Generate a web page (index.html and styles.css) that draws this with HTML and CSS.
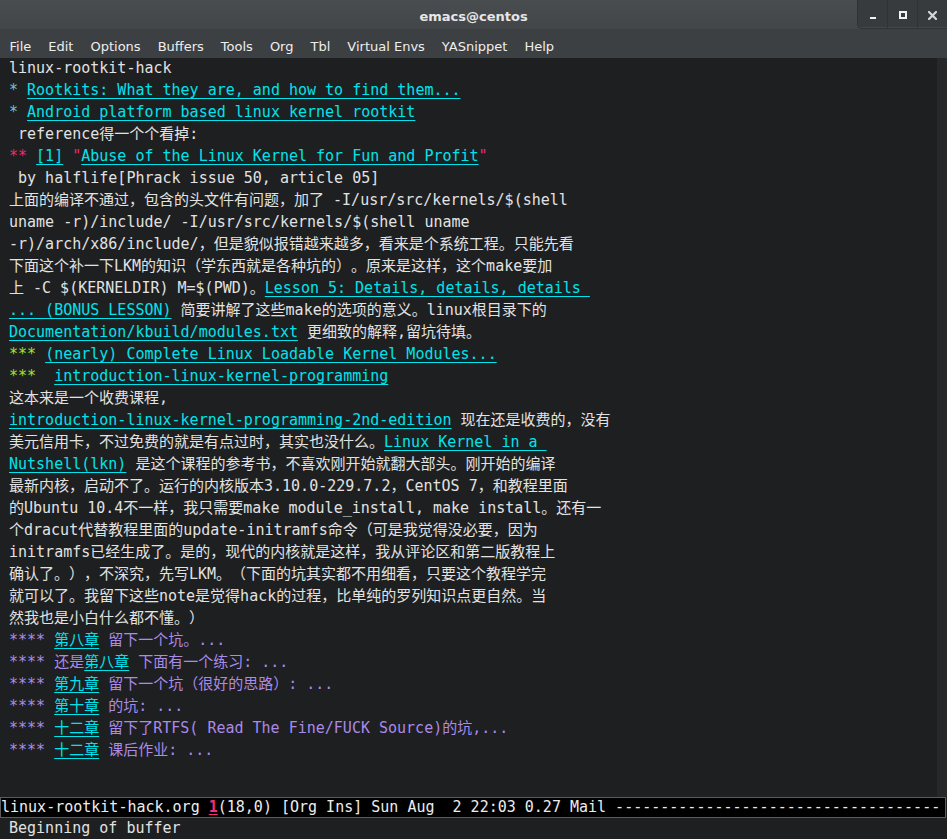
FILE: index.html
```html
<!DOCTYPE html>
<html lang="zh-CN">
<head>
<meta charset="utf-8">
<title>emacs@centos</title>
<link rel="stylesheet" href="styles.css">
</head>
<body>
<div class="frame">
  <header class="titlebar">
    <div class="title-spacer"></div>
    <div class="title">emacs@centos</div>
    <div class="wm">
      <div class="wm-btn"><svg width="8" height="8" viewBox="0 0 8 8"><rect x="1" y="6" width="6" height="2" fill="#f2f2f2"/></svg></div>
      <div class="wm-btn"><svg width="8" height="8" viewBox="0 0 8 8"><rect x="1" y="1" width="6" height="6" fill="none" stroke="#f2f2f2" stroke-width="2"/></svg></div>
      <div class="wm-btn"><svg width="9" height="9" viewBox="0 0 9 9"><path d="M1 1L8 8M8 1L1 8" stroke="#d6d6d6" stroke-width="2.2" stroke-linecap="square"/></svg></div>
    </div>
  </header>
  <nav class="menubar">
    <span class="mi">File</span><span class="mi">Edit</span><span class="mi">Options</span><span class="mi">Buffers</span><span class="mi">Tools</span><span class="mi">Org</span><span class="mi">Tbl</span><span class="mi">Virtual Envs</span><span class="mi">YASnippet</span><span class="mi">Help</span>
  </nav>
  <main class="window">
    <div class="buffer">
<div class="ln">linux-rootkit-hack</div>
<div class="ln"><span class="h1">* </span><a class="lk">Rootkits: What they are, and how to find them...</a></div>
<div class="ln"><span class="h1">* </span><a class="lk">Android platform based linux kernel rootkit</a></div>
<div class="ln"> reference得一个个看掉:</div>
<div class="ln"><span class="h2">** </span><a class="lk">[1]</a> <span class="h2">"</span><a class="lk">Abuse of the Linux Kernel for Fun and Profit</a><span class="h2">"</span></div>
<div class="ln"> by halflife[Phrack issue 50, article 05]</div>
<div class="ln">上面的编译不通过，包含的头文件有问题，加了 -I/usr/src/kernels/$(shell</div>
<div class="ln">uname -r)/include/ -I/usr/src/kernels/$(shell uname</div>
<div class="ln">-r)/arch/x86/include/，但是貌似报错越来越多，看来是个系统工程。只能先看</div>
<div class="ln">下面这个补一下LKM的知识（学东西就是各种坑的）。原来是这样，这个make要加</div>
<div class="ln">上 -C $(KERNELDIR) M=$(PWD)。<a class="lk">Lesson 5: Details, details, details </a></div>
<div class="ln"><a class="lk">... (BONUS LESSON)</a> 简要讲解了这些make的选项的意义。linux根目录下的</div>
<div class="ln"><a class="lk">Documentation/kbuild/modules.txt</a> 更细致的解释,留坑待填。</div>
<div class="ln"><span class="h3">*** </span><a class="lk">(nearly) Complete Linux Loadable Kernel Modules...</a></div>
<div class="ln"><span class="h3">***  </span><a class="lk">introduction-linux-kernel-programming</a></div>
<div class="ln">这本来是一个收费课程,</div>
<div class="ln"><a class="lk">introduction-linux-kernel-programming-2nd-edition</a> 现在还是收费的，没有</div>
<div class="ln">美元信用卡，不过免费的就是有点过时，其实也没什么。<a class="lk">Linux Kernel in a </a></div>
<div class="ln"><a class="lk">Nutshell(lkn)</a> 是这个课程的参考书，不喜欢刚开始就翻大部头。刚开始的编译</div>
<div class="ln">最新内核，启动不了。运行的内核版本3.10.0-229.7.2，CentOS 7，和教程里面</div>
<div class="ln">的Ubuntu 10.4不一样，我只需要make module_install, make install。还有一</div>
<div class="ln">个dracut代替教程里面的update-initramfs命令（可是我觉得没必要，因为</div>
<div class="ln">initramfs已经生成了。是的，现代的内核就是这样，我从评论区和第二版教程上</div>
<div class="ln">确认了。），不深究，先写LKM。（下面的坑其实都不用细看，只要这个教程学完</div>
<div class="ln">就可以了。我留下这些note是觉得hack的过程，比单纯的罗列知识点更自然。当</div>
<div class="ln">然我也是小白什么都不懂。）</div>
<div class="ln h4">**** <a class="lk">第八章</a> 留下一个坑。...</div>
<div class="ln h4">**** 还是<a class="lk">第八章</a> 下面有一个练习: ...</div>
<div class="ln h4">**** <a class="lk">第九章</a> 留下一个坑（很好的思路）: ...</div>
<div class="ln h4">**** <a class="lk">第十章</a> 的坑: ...</div>
<div class="ln h4">**** <a class="lk">十二章</a> 留下了RTFS( Read The Fine/FUCK Source)的坑,...</div>
<div class="ln h4">**** <a class="lk">十二章</a> 课后作业: ...</div>
    </div>
    <div class="fringe-right"></div>
  </main>
  <footer class="modeline"><span class="ml-text">linux-rootkit-hack.org <span class="ml-num">1</span>(18,0) [Org Ins] Sun Aug  2 22:03 0.27 Mail ------------------------------------</span></footer>
  <div class="minibuffer">Beginning of buffer</div>
</div>
</body>
</html>
```

FILE: styles.css
```css
* { box-sizing: border-box; }
html, body {
  margin: 0;
  padding: 0;
  background: #1d1f21;
}
.frame {
  width: 947px;
  height: 839px;
  overflow: hidden;
  display: flex;
  flex-direction: column;
  background: #1d1f21;
}
.titlebar {
  height: 29px;
  flex: none;
  display: grid;
  grid-template-columns: 1fr auto 1fr;
  align-items: start;
  background: linear-gradient(#4a4d4f, #434648);
}
.title {
  font-family: "DejaVu Sans", sans-serif;
  font-weight: bold;
  font-size: 13px;
  color: #e6e6e6;
  line-height: 33px;
}
.wm {
  justify-self: end;
  display: flex;
  height: 29px;
  background: #383b3d;
  border-left: 1px solid #2f3234;
  border-bottom: 1px solid #2f3234;
  border-bottom-left-radius: 5px;
  box-shadow: inset 0 -1px 0 #45484a;
}
.wm-btn {
  width: 30px;
  display: flex;
  align-items: center;
  justify-content: center;
  padding-top: 2px;
  border-left: 1px solid #303335;
}
.wm-btn:first-child { border-left: none; width: 29px; }
.menubar {
  height: 29px;
  flex: none;
  display: flex;
  align-items: flex-start;
  padding-top: 6px;
  padding-left: 1px;
  background: #3d4042;
  font-family: "DejaVu Sans", sans-serif;
  font-size: 13px;
  color: #eeeeee;
}
.mi {
  padding: 0 8.5px;
  line-height: 23px;
}
.window {
  flex: 1;
  display: flex;
  min-height: 0;
}
.buffer {
  flex: 1;
  margin-top: -1px;
  padding-left: 9px;
  font-family: "DejaVu Sans Mono", "Noto Sans CJK SC", monospace;
  font-size: 15px;
  color: #e2e2e2;
  text-spacing-trim: space-all;
}
.ln {
  height: 22px;
  line-height: 22px;
  white-space: pre;
}
.lk {
  color: #00e3ec;
  text-decoration: underline;
  text-decoration-thickness: 1px;
  text-underline-offset: 3px;
}
.h1 { color: #6cc3dc; }
.h2 { color: #ef2a73; }
.h3 { color: #a6e22e; }
.h4 { color: #ab8ae8; }
.fringe-right {
  width: 10px;
  flex: none;
  background: #27282a;
}
.modeline {
  height: 21px;
  flex: none;
  width: 946px;
  background: #000000;
  border: 1px solid #5c5c5c;
  padding-left: 0;
  overflow: hidden;
  white-space: nowrap;
  font-family: "DejaVu Sans Mono", monospace;
  font-size: 15px;
  line-height: 19px;
  color: #ececec;
}
.ml-text { white-space: pre; }
.ml-num {
  color: #f0307a;
  font-weight: bold;
  text-decoration: underline;
  text-underline-offset: 2px;
}
.minibuffer {
  height: 21px;
  flex: none;
  padding-left: 9px;
  white-space: pre;
  font-family: "DejaVu Sans Mono", monospace;
  font-size: 15px;
  line-height: 21px;
  color: #e2e2e2;
}
```
